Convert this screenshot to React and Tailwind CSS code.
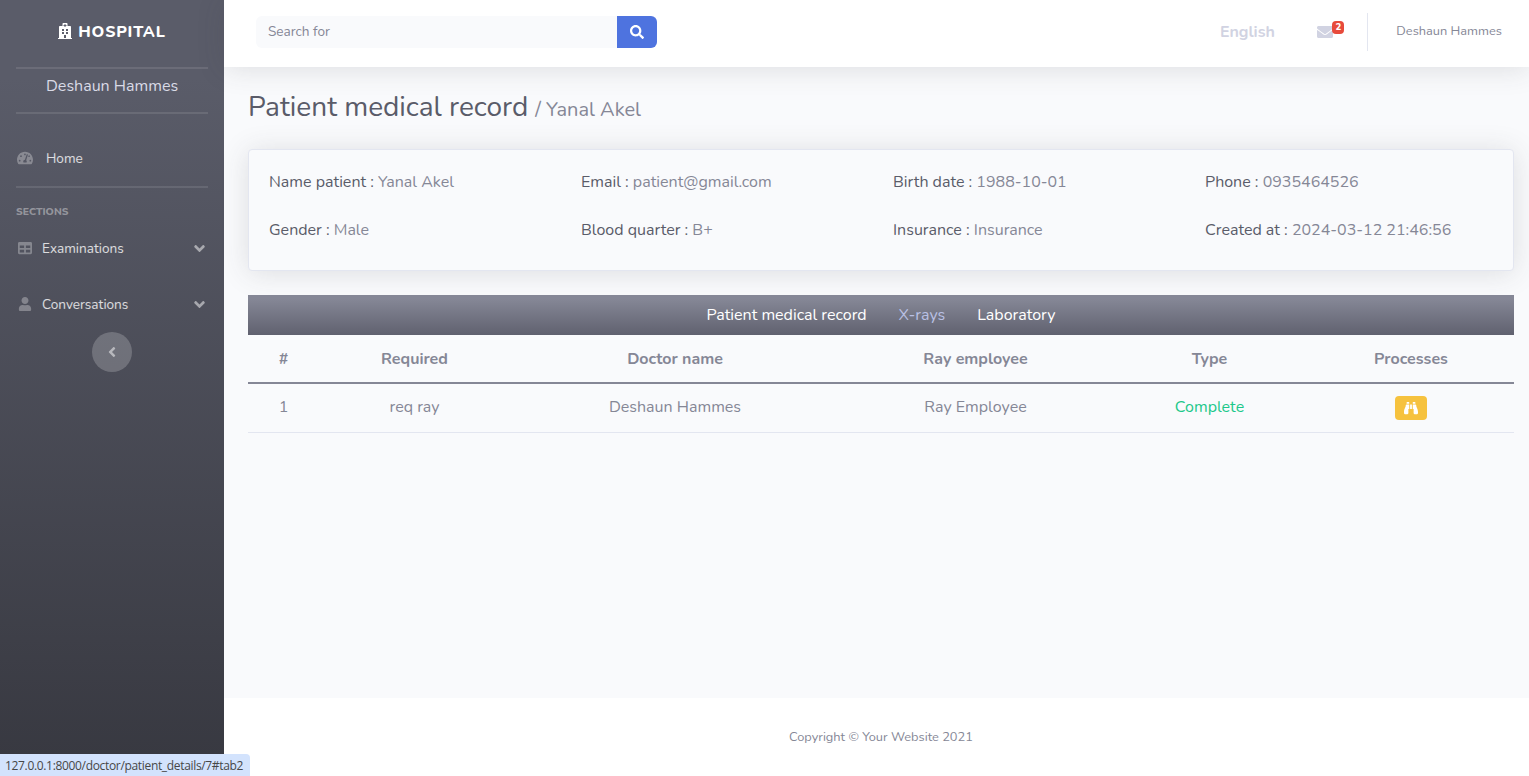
import React from 'react';
import { FaHospital, FaTachometerAlt, FaTable, FaUser, FaAngleDown, FaAngleLeft, FaSearch, FaEnvelope, FaBinoculars } from 'react-icons/fa';

const details = [
  ['Name patient', 'Yanal Akel'],
  ['Email', 'patient@gmail.com'],
  ['Birth date', '1988-10-01'],
  ['Phone', '0935464526'],
  ['Gender', 'Male'],
  ['Blood quarter', 'B+'],
  ['Insurance', 'Insurance'],
  ['Created at', '2024-03-12 21:46:56'],
];

const columns = ['#', 'Required', 'Doctor name', 'Ray employee', 'Type', 'Processes'];

function Rule({ className = '' }) {
  return <div className={`mx-4 h-[2px] shrink-0 bg-white/10 ${className}`} />;
}

function Section({ icon: Icon, label }) {
  return (
    <a className="flex h-14 items-center px-4 text-[13.6px] text-white/80">
      <span className="flex w-[18px] justify-center text-white/30"><Icon size={14} /></span>
      <span className="ml-2 pt-[2px]">{label}</span>
      <FaAngleDown size={17} className="ml-auto text-white/50" />
    </a>
  );
}

function Sidebar() {
  return (
    <aside className="flex w-56 shrink-0 flex-col bg-[linear-gradient(180deg,#5a5c69_10%,#373840_100%)]">
      <div className="flex h-[67px] items-center justify-center gap-[5px] pr-px pb-1 text-white">
        <FaHospital size={16} className="mb-[2px]" />
        <span className="text-base font-extrabold tracking-[0.8px]">HOSPITAL</span>
      </div>
      <Rule />
      <div className="flex h-[43px] items-center pb-[10px] pl-[46px] text-base text-[#d9dae6]">Deshaun Hammes</div>
      <Rule />
      <div className="flex h-[72px] items-end px-4 pb-[17px] text-[13.6px] text-white/80">
        <span className="mb-px flex h-5 w-[18px] items-center justify-center text-white/30"><FaTachometerAlt size={16} /></span>
        <span className="ml-3 leading-5">Home</span>
      </div>
      <Rule />
      <div className="mt-4 px-4 text-[10.4px] leading-4 font-extrabold text-white/40">SECTIONS</div>
      <Section icon={FaTable} label="Examinations" />
      <Section icon={FaUser} label="Conversations" />
      <button className="flex size-10 items-center justify-center self-center rounded-full bg-white/20 text-white/50">
        <FaAngleLeft size={16} />
      </button>
    </aside>
  );
}

function Topbar() {
  return (
    <header className="relative z-10 flex h-[67px] shrink-0 items-start bg-white shadow-[0_2px_28px_0_rgba(58,59,69,0.15)]">
      <div className="mt-4 ml-8 flex h-8 text-[13.6px]">
        <div className="flex w-[361px] items-center rounded-l-md bg-[#f9fafc] pl-3 text-[#858796]">Search for</div>
        <button className="flex w-10 items-center justify-center rounded-r-md bg-[#4e73df] text-white"><FaSearch size={14} /></button>
      </div>
      <div className="ml-auto flex h-16 items-center pr-[27px]">
        <span className="text-base font-bold text-[#d1d3e2]">English</span>
        <span className="relative ml-[42.5px] text-[#d1d3e2]">
          <FaEnvelope size={16} />
          <span className="absolute -top-[3px] left-[15px] flex h-[13px] w-3 items-center justify-center rounded-[4px] bg-[#e74a3b] text-[9.6px] font-extrabold text-white">2</span>
        </span>
        <span className="ml-[34px] h-[38px] w-px bg-[#e3e6f0]" />
        <span className="ml-7 text-[12.8px] text-[#858796]">Deshaun Hammes</span>
      </div>
    </header>
  );
}

function PatientCard() {
  return (
    <section className="mt-[25px] grid h-[122px] shrink-0 grid-cols-[312px_312px_312px_1fr] content-start gap-y-6 rounded border border-[#e3e6f0] bg-[#f9fafc] px-5 pt-5 text-base text-[#5a5c69] shadow-[0_2px_28px_0_rgba(58,59,69,0.15)]">
      {details.map(([label, value]) => (
        <div key={label} className="whitespace-nowrap">
          {label} : <span className="text-[#858796]">{value}</span>
        </div>
      ))}
    </section>
  );
}

function RaysTable() {
  return (
    <table className="w-[1266px] table-fixed border-separate border-spacing-0 text-center text-base [&_td]:border-b [&_td]:border-[#e3e6f0] [&_td]:p-0 [&_td]:pb-[3px] [&_th]:border-b-2 [&_th]:border-[#858796] [&_th]:p-0">
      <colgroup>
        <col className="w-[71px]" />
        <col className="w-[191px]" />
        <col className="w-[330px]" />
        <col className="w-[271px]" />
        <col className="w-[197px]" />
        <col className="w-[206px]" />
      </colgroup>
      <thead>
        <tr className="h-[49px] font-bold">
          {columns.map((h) => <th key={h}>{h}</th>)}
        </tr>
      </thead>
      <tbody>
        <tr className="h-[49px]">
          <td>1</td>
          <td>req ray</td>
          <td>Deshaun Hammes</td>
          <td>Ray Employee</td>
          <td className="text-[#1cc88a]">Complete</td>
          <td>
            <span className="mx-auto mt-[3px] flex h-6 w-8 items-center justify-center rounded bg-[#f6c23e] text-white"><FaBinoculars size={14} /></span>
          </td>
        </tr>
      </tbody>
    </table>
  );
}

export default function App() {
  return (
    <div className="relative flex h-[776px] w-[1529px] overflow-hidden bg-[#f9fafc] font-['Nunito','Lato',sans-serif] text-[#858796]">
      <Sidebar />
      <div className="flex min-w-0 flex-1 flex-col">
        <Topbar />
        <main className="flex flex-1 flex-col pr-[15px] pl-6">
          <h1 className="mt-[23px] flex h-[34px] items-baseline text-[28px] leading-[34px] text-[#5a5c69]">
            Patient medical record <span className="ml-[7px] text-xl text-[#858796]">/ Yanal Akel</span>
          </h1>
          <PatientCard />
          <nav className="mt-6 flex h-10 shrink-0 items-center justify-center gap-8 bg-[linear-gradient(180deg,#858796_10%,#60616f_100%)] text-base text-white">
            <a>Patient medical record</a>
            <a className="text-[#b9c0e4]">X-rays</a>
            <a>Laboratory</a>
          </nav>
          <RaysTable />
        </main>
        <footer className="flex h-[78px] shrink-0 items-center justify-center bg-white pt-px pl-[9px] text-[12.8px]">Copyright © Your Website 2021</footer>
      </div>
      <div className="absolute bottom-0 left-0 z-20 flex h-[22px] w-[250px] items-center rounded-tr bg-[#d3e3fd] pt-px pl-[5px] font-['Open_Sans',sans-serif] text-xs tracking-[-0.33px] whitespace-nowrap text-[#474747]">
        127.0.0.1:8000/doctor/patient_details/7#tab2
      </div>
    </div>
  );
}
